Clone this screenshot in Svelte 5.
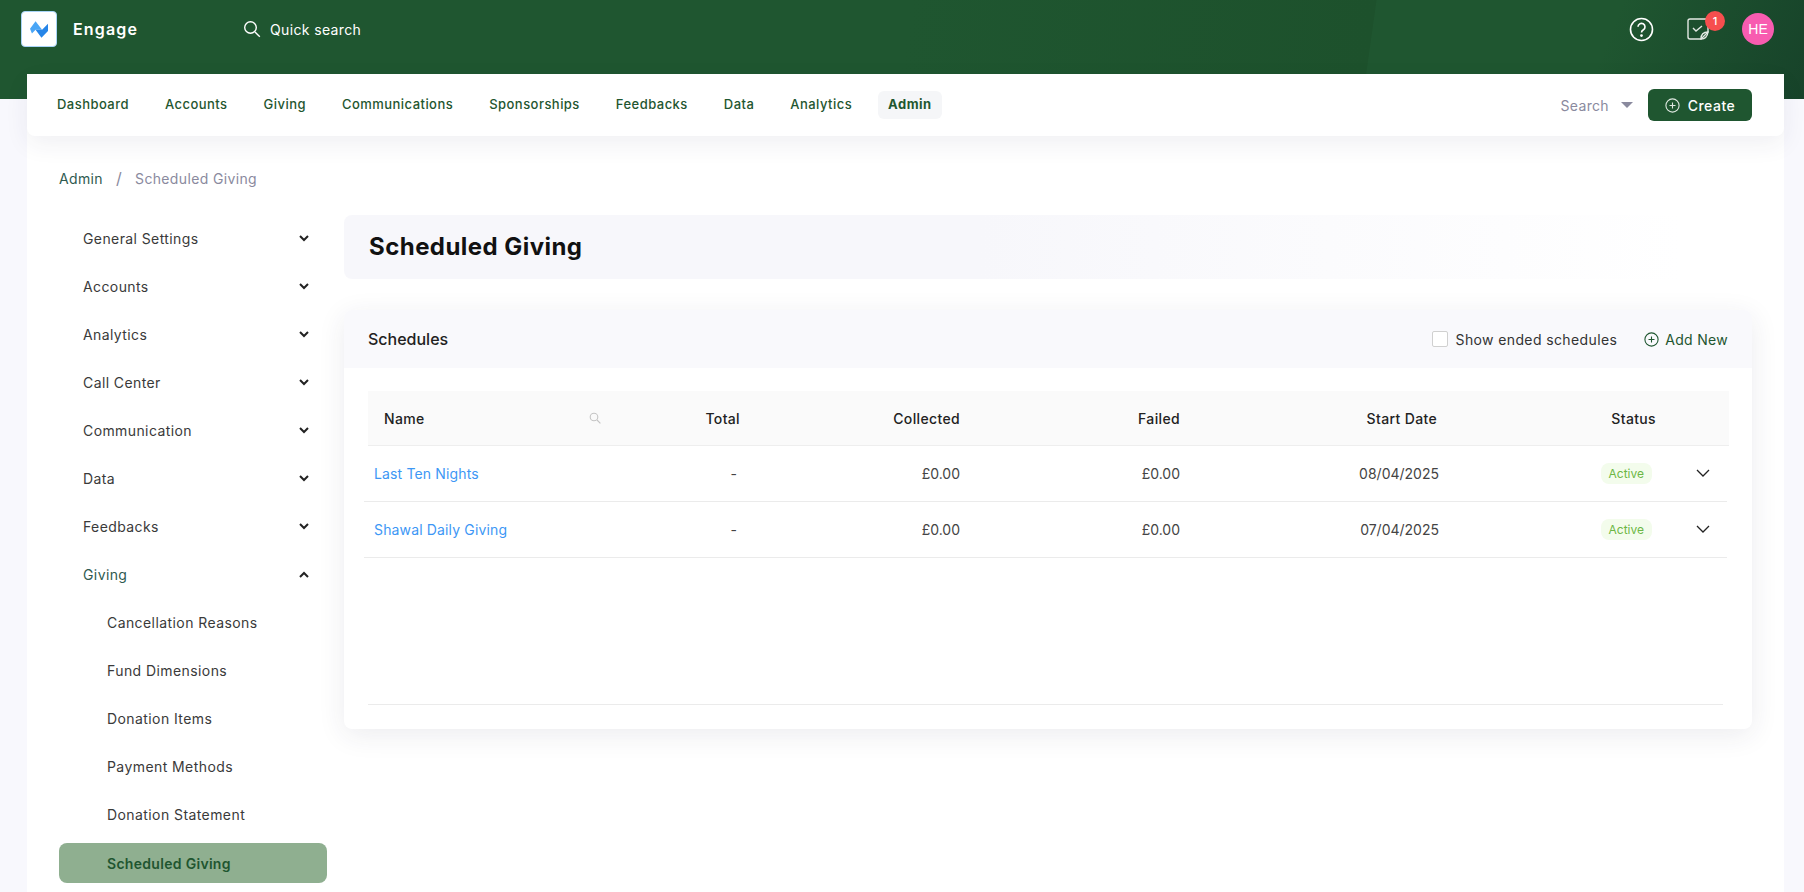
<script lang="ts">
  const navItems = ['Dashboard', 'Accounts', 'Giving', 'Communications', 'Sponsorships', 'Feedbacks', 'Data', 'Analytics', 'Admin'];
  const sideItems = ['General Settings', 'Accounts', 'Analytics', 'Call Center', 'Communication', 'Data', 'Feedbacks'];
  const givingItems = ['Cancellation Reasons', 'Fund Dimensions', 'Donation Items', 'Payment Methods', 'Donation Statement'];
  const schedules = [
    { name: 'Last Ten Nights', date: '08/04/2025' },
    { name: 'Shawal Daily Giving', date: '07/04/2025' }
  ];
</script>

<div class="page">
  <header class="top">
    <div class="logo">
      <svg width="18" height="17" viewBox="90 62 55 51"><path d="M90 85l17-23 20 26-20 0-11 12z" fill="#4aa6f6"/><path d="M107 88h20l18-18v22l-20 21z" fill="#2585e8"/></svg>
    </div>
    <span class="brand">Engage</span>
    <div class="quick">
      <svg width="18" height="18" viewBox="0 0 18 18" fill="none" stroke="#fff" stroke-width="1.4"><circle cx="7.5" cy="7.5" r="5.8"/><path d="M12 12l4.8 4.8"/></svg>
      <span>Quick search</span>
    </div>
    <div class="top-right">
      <svg class="help" width="25" height="25" viewBox="0 0 25 25" fill="none" stroke="#fff" stroke-width="1.6"><circle cx="12.5" cy="12.5" r="11"/><path d="M9 9.8a3.5 3.5 0 1 1 5.4 3c-1.3.8-1.9 1.4-1.9 2.7"/><circle cx="12.5" cy="18.6" r=".6" fill="#fff"/></svg>
      <div class="tasks">
        <svg width="24" height="24" viewBox="0 0 24 24" fill="none" stroke="#e3e9e4" stroke-width="1.4"><path d="M15 22H4a2 2 0 0 1-2-2V4a2 2 0 0 1 2-2h16a2 2 0 0 1 2 2v11z"/><path d="M15 22c0-4 2-7 7-7-.5 4-3 7-7 7z"/><path d="M7 11l3 3 6-5"/></svg>
        <span class="badge">1</span>
      </div>
      <div class="avatar">HE</div>
    </div>
  </header>

  <div class="shell">
    <nav class="mainnav">
      {#each navItems as item}
        <a class="navlink" class:current={item === 'Admin'} href="#top">{item}</a>
      {/each}
      <div class="nav-right">
        <span class="nav-search">Search</span>
        <span class="caret"></span>
        <button class="create" type="button">
          <svg width="15" height="15" viewBox="0 0 15 15" fill="none" stroke="#dfe8e1" stroke-width="1.1"><circle cx="7.5" cy="7.5" r="6.6"/><path d="M7.5 4.5v6M4.5 7.5h6"/></svg>
          Create
        </button>
      </div>
    </nav>

    <div class="crumbs">
      <span class="crumb">Admin</span>
      <span class="sep">/</span>
      <span class="crumb-now">Scheduled Giving</span>
    </div>

    <div class="body">
      <aside class="side">
        {#each sideItems as item}
          <div class="side-item">
            <span>{item}</span>
            <svg width="10" height="7" viewBox="0 0 10 7" fill="none" stroke="#222" stroke-width="2"><path d="M1 1l4 4 4-4"/></svg>
          </div>
        {/each}
        <div class="side-item">
          <span class="open">Giving</span>
          <svg width="10" height="7" viewBox="0 0 10 7" fill="none" stroke="#222" stroke-width="2"><path d="M1 6l4-4 4 4"/></svg>
        </div>
        {#each givingItems as item}
          <div class="side-sub">{item}</div>
        {/each}
        <div class="side-sub active">Scheduled Giving</div>
      </aside>

      <main class="content">
        <div class="title"><h1>Scheduled Giving</h1></div>
        <section class="card">
          <div class="card-head">
            <h2>Schedules</h2>
            <label class="check"><span class="box"></span>Show ended schedules</label>
            <span class="add">
              <svg width="15" height="15" viewBox="0 0 15 15" fill="none" stroke="#1f5630" stroke-width="1.1"><circle cx="7.5" cy="7.5" r="6.6"/><path d="M7.5 4.5v6M4.5 7.5h6"/></svg>
              Add New
            </span>
          </div>
          <div class="table">
            <div class="thead grid">
              <div class="name-head">Name
                <svg width="12" height="12" viewBox="0 0 12 12" fill="none" stroke="#c4c4c4" stroke-width="1.1"><circle cx="5" cy="5" r="3.8"/><path d="M8 8l3.4 3.4"/></svg>
              </div>
              <div class="r">Total</div>
              <div class="r">Collected</div>
              <div class="r">Failed</div>
              <div class="r start-head">Start Date</div>
              <div class="status-head">Status</div>
              <div></div>
            </div>
            {#each schedules as s}
              <div class="row grid">
                <a class="link" href="#top">{s.name}</a>
                <div class="r dash">-</div>
                <div class="r">£0.00</div>
                <div class="r">£0.00</div>
                <div class="r date">{s.date}</div>
                <div class="status-cell"><span class="pill">Active</span></div>
                <svg class="expand" width="14" height="9" viewBox="0 0 14 9" fill="none" stroke="#222" stroke-width="1.3"><path d="M1 1l6 6 6-6"/></svg>
              </div>
            {/each}
            <div class="table-foot"></div>
          </div>
        </section>
      </main>
    </div>
  </div>
</div>

<style>
  :global(body) {
    background: #f8f8fd;
    font-family: Inter, "Noto Sans", sans-serif;
    color: #222;
  }
  .page { height: 892px; overflow: hidden; }
  .top {
    height: 99px;
    box-sizing: border-box;
    padding: 11px 30px 0 21px;
    display: flex;
    align-items: flex-start;
    background:
      linear-gradient(98deg, transparent 50%, #1d512c 75.7%, transparent 75.75%),
      linear-gradient(112deg, transparent 88%, #17432a 100%),
      #1f5630;
  }
  .logo {
    width: 36px;
    height: 36px;
    box-sizing: border-box;
    background: #fff;
    border: 1px solid #a9d4f8;
    border-radius: 4px;
    display: flex;
    align-items: center;
    justify-content: center;
  }
  .brand {
    margin-left: 16px;
    color: #fff;
    font-size: 16px;
    font-weight: 600;
    letter-spacing: 1.15px;
    line-height: 36px;
  }
  .quick {
    margin-left: 105px;
    display: flex;
    align-items: center;
    gap: 9px;
    height: 36px;
    color: #fff;
    font-size: 14px;
    letter-spacing: .35px;
  }
  .top-right {
    margin-left: auto;
    display: flex;
    align-items: center;
    height: 36px;
  }
  .tasks { position: relative; margin-left: 32px; height: 24px; }
  .badge {
    position: absolute;
    right: -15px;
    top: -6px;
    width: 20px;
    height: 20px;
    border-radius: 50%;
    background: #f64e4e;
    color: #fff;
    font-size: 11px;
    font-weight: 500;
    line-height: 20px;
    text-align: center;
  }
  .avatar {
    margin-left: 32px;
    width: 32px;
    height: 32px;
    border-radius: 50%;
    background: #f85cb0;
    color: #fff;
    font: 14px/32px "Liberation Sans", sans-serif;
    text-align: center;
  }
  .shell {
    margin: -25px 20px 0 27px;
    background: #fff;
    height: 818px;
  }
  .mainnav {
    height: 62px;
    box-sizing: border-box;
    padding: 0 32px 0 20px;
    background: #fff;
    border-radius: 8px;
    display: flex;
    align-items: center;
    gap: 16px;
    box-shadow: 0 8px 24px rgba(40, 40, 80, .07);
  }
  .navlink {
    padding: 5px 10px 7px;
    border-radius: 6px;
    font-size: 13px;
    font-weight: 500;
    letter-spacing: .46px;
    color: #1f5630;
    text-decoration: none;
  }
  .navlink.current { background: #f5f6f8; font-weight: 700; }
  .nav-right { margin-left: auto; display: flex; align-items: center; }
  .nav-search { color: #8a8a9e; font-size: 14px; letter-spacing: .35px; }
  .caret {
    margin: 0 15px 0 12px;
    border: 6px solid transparent;
    border-top: 6px solid #8a8a9e;
    border-bottom: 0;
  }
  .create {
    width: 104px;
    height: 32px;
    background: #1f5630;
    border: 0;
    border-radius: 6px;
    color: #fff;
    font: 500 14px Inter, sans-serif;
    letter-spacing: .5px;
    display: flex;
    align-items: center;
    justify-content: center;
    gap: 8px;
  }
  .crumbs {
    margin-top: 32px;
    padding-left: 32px;
    height: 20px;
    display: flex;
    align-items: center;
    font-size: 14px;
    letter-spacing: .35px;
  }
  .crumb { color: #2f5a50; }
  .sep { margin: 0 13px; color: #8a8a9e; font-size: 16px; }
  .crumb-now { color: #8a8a9e; }
  .body {
    margin-top: 17px;
    padding: 10px 32px 0 32px;
    display: flex;
  }
  .side { width: 268px; flex: none; margin-top: -1px; }
  .side-item {
    height: 48px;
    box-sizing: border-box;
    padding: 0 18px 0 24px;
    display: flex;
    align-items: center;
    justify-content: space-between;
    font-size: 14px;
    letter-spacing: .4px;
    color: #3a3a3a;
  }
  .open { color: #2f5a50; }
  .side-sub {
    height: 48px;
    padding-left: 48px;
    display: flex;
    align-items: center;
    font-size: 14px;
    letter-spacing: .42px;
    color: #3a3a3a;
  }
  .side-sub.active {
    height: 40px;
    margin-top: 5px;
    border-radius: 8px;
    background: #8faf90;
    color: #1f5630;
    font-weight: 600;
    letter-spacing: .3px;
  }
  .content { margin-left: 17px; flex: 1; min-width: 0; }
  .title {
    height: 64px;
    box-sizing: border-box;
    padding: 0 0 2px 25px;
    display: flex;
    align-items: center;
    border-radius: 8px;
    background: linear-gradient(90deg, #f7f7fb 45%, #fff 95%);
  }
  h1 { margin: 0; font-size: 24px; font-weight: 700; letter-spacing: .45px; color: #111; }
  .card {
    margin-top: 31px;
    height: 419px;
    border-radius: 8px;
    background: #fff;
    box-shadow: 0 6px 28px rgba(40, 40, 80, .09);
    overflow: hidden;
  }
  .card-head {
    height: 58px;
    padding: 0 24px;
    background: #f9f9fc;
    display: flex;
    align-items: center;
    font-size: 14px;
  }
  h2 { margin: 0 auto 0 0; font-size: 16px; font-weight: 500; color: #222; }
  .check { display: flex; align-items: center; gap: 8px; letter-spacing: .38px; color: #333; }
  .box {
    width: 14px;
    height: 14px;
    background: #fff;
    border: 1px solid #d0d0d0;
    border-radius: 2px;
  }
  .add { margin-left: 27px; display: flex; align-items: center; gap: 6px; color: #1f5630; letter-spacing: .3px; }
  .table { padding: 23px 23px 0 24px; }
  .grid {
    display: grid;
    grid-template-columns: 242px 130px 220px 220px 260px 220px 68px;
    align-items: center;
    font-size: 14px;
  }
  .thead {
    height: 55px;
    box-sizing: border-box;
    background: #fafafa;
    border-bottom: 1px solid #eee;
    font-weight: 500;
    letter-spacing: .35px;
    color: #222;
  }
  .name-head {
    padding: 0 9px 0 16px;
    display: flex;
    align-items: center;
    justify-content: space-between;
  }
  .r { text-align: right; }
  .start-head { padding-right: 3px; }
  .status-head { text-align: right; padding-right: 4px; }
  .row {
    height: 56px;
    box-sizing: border-box;
    margin: 0 2px 0 -4px;
    padding-left: 4px;
    border-bottom: 1px solid #ebebeb;
    color: #444;
  }
  .link { padding-left: 6px; color: #3d97f5; text-decoration: none; letter-spacing: .15px; }
  .dash { padding-right: 3px; }
  .date { padding-right: 1px; }
  .status-cell { text-align: right; padding-right: 8px; }
  .pill {
    display: inline-block;
    padding: 3px 8px;
    border-radius: 8px;
    background: #f3fcec;
    color: #6cb744;
    font-size: 12px;
  }
  .expand { margin-left: 36px; }
  .table-foot { margin: 146px 6px 0 0; border-top: 1px solid #ebebeb; }
</style>
